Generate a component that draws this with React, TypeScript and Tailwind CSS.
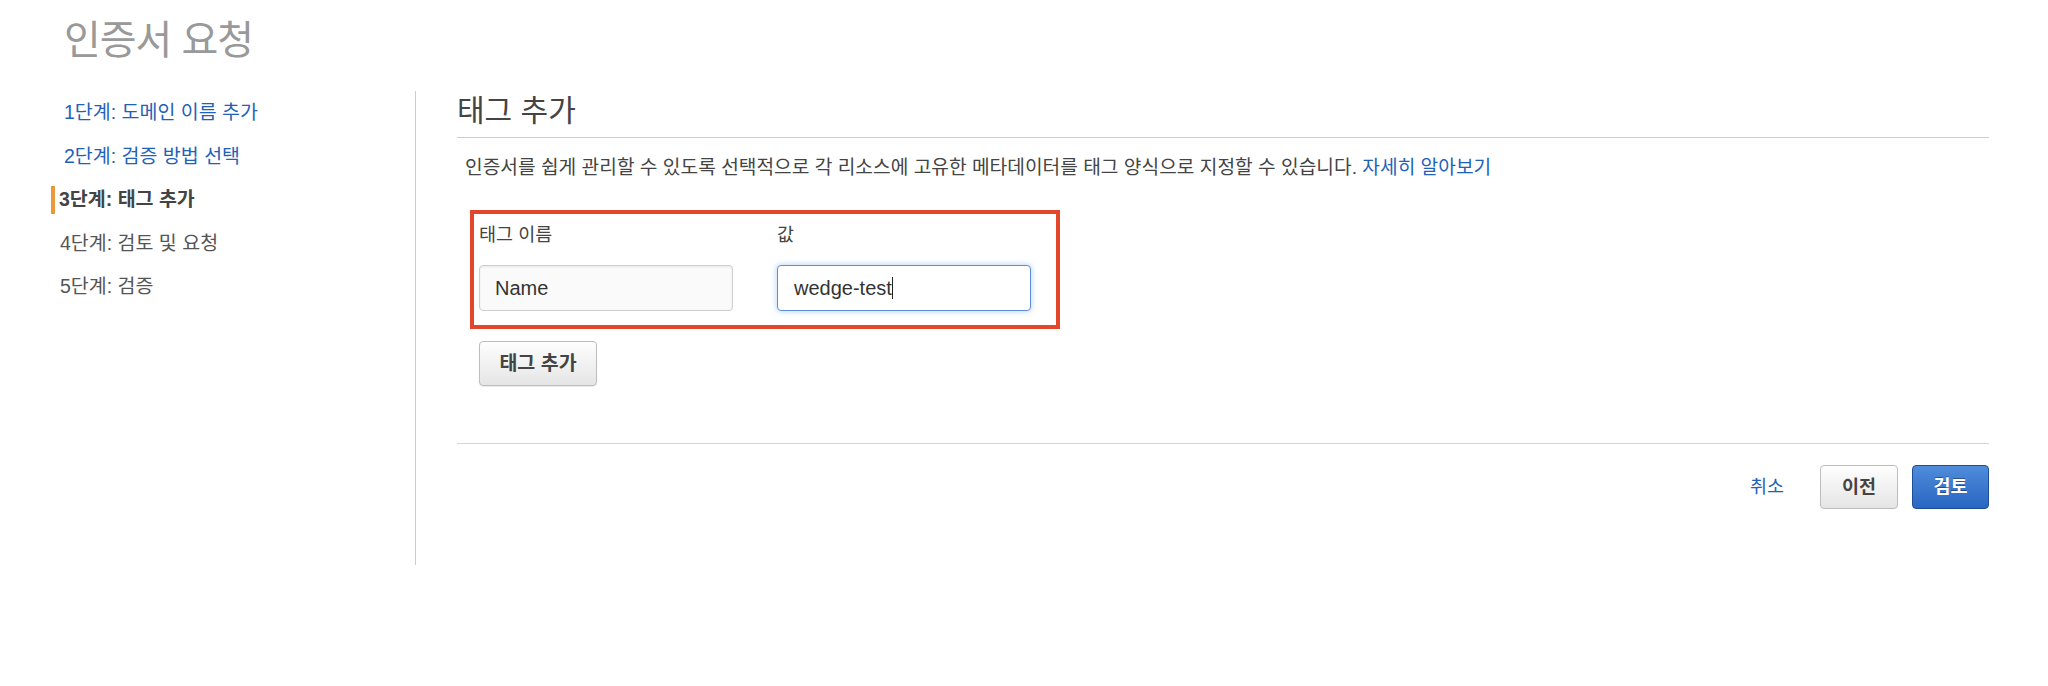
import React from "react";

const steps = [
  { label: "1단계: 도메인 이름 추가", state: "done" },
  { label: "2단계: 검증 방법 선택", state: "done" },
  { label: "3단계: 태그 추가", state: "active" },
  { label: "4단계: 검토 및 요청", state: "todo" },
  { label: "5단계: 검증", state: "todo" },
];

const App = () => {
  return (
    <div
      className="w-[2048px] h-[686px] bg-white text-[#444]"
      style={{ fontFamily: '"Liberation Sans", "Noto Sans CJK KR", sans-serif' }}
    >
      {/* page title */}
      <div className="h-[91px] pl-[64px] pt-[16px]">
        <h1 className="text-[40px] leading-[48px] tracking-[-1px] text-[#999]">인증서 요청</h1>
      </div>

      <div className="flex">
        {/* wizard steps */}
        <div className="w-[416px] h-[474px] border-r border-[#ccc]">
          <ul>
            {steps.map((step) => (
              <li key={step.label} className="h-[43.5px] flex items-center text-[19.5px]">
                {step.state === "done" && (
                  <span className="pl-[64px] text-[#1f62b8]">{step.label}</span>
                )}
                {step.state === "active" && (
                  <div className="flex items-center pl-[51px] gap-[4px]">
                    <span className="w-[4px] h-[28px] bg-[#eb9a3a]"></span>
                    <span className="font-bold text-[#444]">{step.label}</span>
                  </div>
                )}
                {step.state === "todo" && (
                  <span className="pl-[60px] text-[#555]">{step.label}</span>
                )}
              </li>
            ))}
          </ul>
        </div>

        {/* step content */}
        <div className="w-[1573px] pl-[41px]">
          <h2 className="text-[30px] leading-[40px] text-[#444] pb-[6px] border-b border-[#ccc]">
            태그 추가
          </h2>

          <p className="mt-[17px] pl-[8px] text-[19.2px] leading-[26px] text-[#444]">
            인증서를 쉽게 관리할 수 있도록 선택적으로 각 리소스에 고유한 메타데이터를 태그 양식으로 지정할 수 있습니다.{" "}
            <a className="text-[#1f62b8]">자세히 알아보기</a>
          </p>

          <div className="mt-[29px] ml-[13px] w-[590px] h-[119px] border-4 border-[#e2462b] pl-[5px] pt-[9px]">
            <div className="flex gap-[44px]">
              <div className="w-[254px]">
                <div className="text-[18.5px] leading-[24px] text-[#444]">태그 이름</div>
                <div className="mt-[18px] h-[46px] rounded-[4px] border border-[#cfcfcf] bg-[#fafafa] shadow-[inset_0_1px_2px_rgba(0,0,0,0.08)] flex items-center pl-[15px] text-[20px] text-[#333]">
                  Name
                </div>
              </div>
              <div className="w-[254px]">
                <div className="text-[18.5px] leading-[24px] text-[#444]">값</div>
                <div className="mt-[18px] h-[46px] rounded-[4px] border border-[#5d8fd8] bg-white shadow-[0_0_6px_rgba(82,140,236,0.45)] flex items-center pl-[16px] text-[20px] text-[#333]">
                  wedge-test
                  <span className="w-px h-[22px] bg-[#222]"></span>
                </div>
              </div>
            </div>
          </div>

          <button className="mt-[12px] ml-[22px] w-[118px] h-[45px] rounded-[4px] border border-[#bdbdbd] bg-linear-to-b from-[#fefefe] to-[#e5e5e5] text-[19.5px] font-bold text-[#444] shadow-[0_1px_1px_rgba(0,0,0,0.08)]">
            태그 추가
          </button>

          <div className="mt-[57px] border-t border-[#d5d5d5]"></div>

          <div className="mt-[21px] flex items-center justify-end">
            <a className="text-[18.5px] text-[#1f62b8]">취소</a>
            <button className="ml-[36px] w-[78px] h-[44px] rounded-[4px] border border-[#bdbdbd] bg-linear-to-b from-[#fefefe] to-[#e5e5e5] text-[18.5px] font-bold text-[#444]">
              이전
            </button>
            <button className="ml-[14px] w-[77px] h-[44px] rounded-[4px] border border-[#1e4f96] bg-linear-to-b from-[#4f8cdb] to-[#2866c2] text-[18.5px] font-bold text-white [text-shadow:0_-1px_0_rgba(0,0,0,0.35)]">
              검토
            </button>
          </div>
        </div>
      </div>
    </div>
  );
};

export default App;
